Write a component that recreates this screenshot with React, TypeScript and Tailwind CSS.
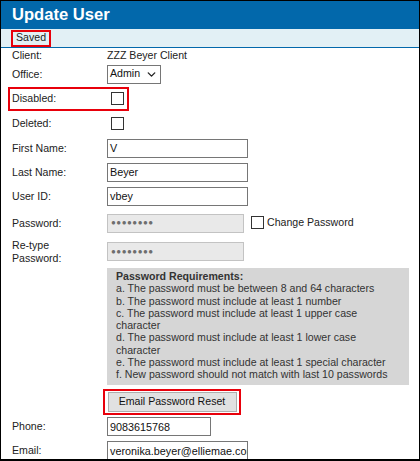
import { ChevronDown } from 'lucide-react';

const FONT = { fontFamily: '"Liberation Sans", Arial, sans-serif' };

function Checkbox() {
  return <span className="block w-[13px] h-[13px] border border-[#333] bg-white" />;
}

function Label({ children }: { children: React.ReactNode }) {
  return <div className="w-[106px] shrink-0 pl-[11px] text-[10.6px] text-[#222] leading-[13px]">{children}</div>;
}

function TextInput({ value, width = 'w-[141px]' }: { value: string; width?: string }) {
  return (
    <div className={`${width} h-[19px] border border-[#767676] bg-white flex items-center pl-[2px] overflow-hidden whitespace-nowrap text-[10.8px] text-[#111]`}>
      {value}
    </div>
  );
}

function MaskedInput() {
  return (
    <div className="w-[137px] h-[19px] border border-[#c3c3c3] bg-[#e9e9e9] flex items-center pl-[3px] text-[8px] tracking-[0.5px] text-[#6e6e6e]">
      ●●●●●●●●
    </div>
  );
}

const requirements = [
  'a. The password must be between 8 and 64 characters',
  'b. The password must include at least 1 number',
  'c. The password must include at least 1 upper case character',
  'd. The password must include at least 1 lower case character',
  'e. The password must include at least 1 special character',
  'f. New password should not match with last 10 passwords',
];

export default function App() {
  return (
    <div className="w-[420px] h-[461px] bg-white border border-black border-b-2 overflow-hidden" style={FONT}>
      {/* HEADER */}
      <div className="h-[28px] bg-[#0268ab] flex items-center pl-[11px]">
        <span className="text-white font-bold text-[16.6px] leading-none">Update User</span>
      </div>
      <div className="h-[19px] bg-[#e2f0f5] border-b border-[#0268ab] flex items-center pl-[10px]">
        <span className="border-2 border-[#e8000b] h-[17px] w-[40px] pl-[3px] flex items-center text-[10.6px] text-[#222]">Saved</span>
      </div>

      {/* FIELDS */}
      <div className="h-[13px] mt-[1px] flex items-center">
        <Label>Client:</Label>
        <span className="text-[10.6px] text-[#222] leading-[13px]">ZZZ Beyer Client</span>
      </div>

      <div className="h-[24px] flex items-center">
        <Label>Office:</Label>
        <div className="w-[54px] h-[19px] border border-[#767676] flex items-center pl-[2px] gap-[5px] text-[10.6px] text-[#111]">
          Admin
          <ChevronDown size={13} strokeWidth={2.5} className="text-[#222]" />
        </div>
      </div>

      <div className="h-[25px] flex items-center">
        <div className="ml-[7px] w-[121px] h-[24px] border-2 border-[#e8000b] flex items-center">
          <div className="w-[93px] shrink-0 pl-[2px] text-[10.6px] text-[#222]">Disabled:</div>
          <div className="pl-[8px]">
            <Checkbox />
          </div>
        </div>
      </div>

      <div className="h-[25px] flex items-center">
        <Label>Deleted:</Label>
        <div className="pl-[4px]">
          <Checkbox />
        </div>
      </div>

      <div className="h-[24px] flex items-center">
        <Label>First Name:</Label>
        <TextInput value="V" />
      </div>
      <div className="h-[24px] flex items-center">
        <Label>Last Name:</Label>
        <TextInput value="Beyer" />
      </div>
      <div className="h-[24px] flex items-center">
        <Label>User ID:</Label>
        <TextInput value="vbey" />
      </div>

      <div className="h-[30px] flex items-center">
        <Label>Password:</Label>
        <MaskedInput />
        <div className="ml-[7px] flex items-center gap-[3px]">
          <Checkbox />
          <span className="text-[10.6px] text-[#222]">Change Password</span>
        </div>
      </div>

      <div className="h-[24px] flex items-start pt-[1px]">
        <Label>
          Re-type
          <br />
          Password:
        </Label>
        <div className="mt-[3px]">
          <MaskedInput />
        </div>
      </div>

      {/* REQUIREMENTS */}
      <div className="ml-[106px] mt-[6px] w-[302px] bg-[#d6d6d6] pl-[9px] pr-[14px] pt-[2px] pb-[4px] text-[10.6px] leading-[12.3px] text-[#333]">
        <div className="font-bold">Password Requirements:</div>
        {requirements.map((r) => (
          <div key={r}>{r}</div>
        ))}
      </div>

      <div className="ml-[102px] mt-[4px] w-[138px] h-[26px] border-2 border-[#e8000b] flex items-center justify-center">
        <button className="w-[129px] h-[20px] border border-[#adadad] bg-[#e1e1e1] text-[10.6px] text-[#111] leading-none">
          Email Password Reset
        </button>
      </div>

      <div className="h-[24px] flex items-center">
        <Label>Phone:</Label>
        <TextInput value="9083615768" width="w-[104px]" />
      </div>
      <div className="h-[24px] flex items-center">
        <Label>Email:</Label>
        <TextInput value="veronika.beyer@elliemae.com" />
      </div>
    </div>
  );
}
